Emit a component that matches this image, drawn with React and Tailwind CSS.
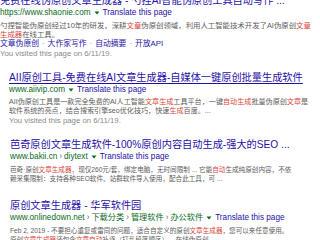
import React from 'react';

const results = [
  {
    title: '免费在线伪原创文章生成器 - 勺捏AI智能伪原创工具自动写作 ...',
    url: ['https://www.shaonie.com'],
    snippet: [
      [['勺捏智能伪原创经过10年的研发，深耕'], ['文章', 1], ['伪原创领域，利用人工智能技术开发了AI伪原创'], ['文章', 1]],
      [['生成器', 1], ['在线工具。']],
    ],
    sitelinks: ['文章伪原创', '大作家写作', '自动摘要', '开放API'],
    visited: true,
    wrap: 'pl-0 -mt-[6.5px]',
    snip: 'text-[7.4px]',
  },
  {
    title: 'AII原创工具-免费在线AI文章生成器-自媒体一键原创批量生成软件',
    underline: true,
    url: ['www.aiivip.com'],
    snippet: [
      [['AII伪原创工具是一款完全免费的AI人工智能'], ['文章生成', 1], ['工具平台，一键'], ['自动生成', 1], ['批量伪原创'], ['文章', 1], ['是']],
      [['软件系统的亮点，结合搜索引擎seo优化技巧，快速'], ['生成', 1], ['百度。...']],
    ],
    visited: true,
    wrap: 'pl-[9px] mt-[13px]',
    snip: 'text-[7.1px]',
  },
  {
    title: '芭奇原创文章生成软件-100%原创内容自动生成-强大的SEO ...',
    url: ['www.bakii.cn', 'diytext'],
    snippet: [
      [['芭奇·原创'], ['文章生成器', 1], ['，现仅260元/套，绑定电脑，无时间限制 ... 它能'], ['自动', 1], ['生成纯原创内容，不依']],
      [['赖采集限制：支持各种SEO软件、站群软件导入使用，配合此工具，可 ...']],
    ],
    wrap: 'pl-[10px] mt-[13px]',
    snip: 'text-[6.6px]',
  },
  {
    title: '原创文章生成器 - 华军软件园',
    url: ['www.onlinedown.net', '下载分类', '管理软件', '办公软件'],
    snippet: [
      [['Feb 2, 2019 - 不要担心重复或雷同的问题，适合自定义的原创'], ['文章生成器', 1], ['，您可以来任意使用。']],
      [['原创'], ['文章生成器', 1], ['还包含'], ['文章自动', 1], ['补逐（打乱段落顺序）... 在线伪原创']],
    ],
    wrap: 'pl-[10px] mt-[16px]',
    snip: 'text-[6.6px]',
  },
];

const Result = ({ r }) => (
  <div className={r.wrap}>
    <div
      className={`text-[10.2px] leading-[13px] whitespace-nowrap text-[#1f11a6] ${
        r.underline ? 'underline decoration-[0.8px] underline-offset-[1.5px]' : ''
      }`}
    >
      {r.title}
    </div>
    <div className="flex items-center text-[8.2px] leading-[12px] whitespace-nowrap">
      <span className="text-[#0b6a25]">
        {r.url.map((u, i) => (
          <React.Fragment key={i}>
            {i > 0 && <span className="text-[#5f6368] mx-[2px]">›</span>}
            {u}
          </React.Fragment>
        ))}
      </span>
      <svg width="6" height="4" viewBox="0 0 6 4" className="mx-[3px]">
        <path d="M0.5 0.5h5L3 3.5z" fill="#0b6a25" />
      </svg>
      <span className="text-[#1f11a6]">Translate this page</span>
    </div>
    <div className={`mt-[2px] ${r.snip} leading-[9px] text-[#5c5c5c]`}>
      {r.snippet.map((line, i) => (
        <div key={i} className="whitespace-nowrap">
          {line.map(([t, red], j) => (
            <span key={j} className={red ? 'text-[#d9463a]' : ''}>
              {t}
            </span>
          ))}
        </div>
      ))}
    </div>
    {r.sitelinks && (
      <div className="text-[7.8px] leading-[10px] whitespace-nowrap text-[#1f11a6]">
        {r.sitelinks.map((s, i) => (
          <React.Fragment key={i}>
            {i > 0 && <span className="text-[#777] mx-[3px]">·</span>}
            {s}
          </React.Fragment>
        ))}
      </div>
    )}
    {r.visited && (
      <div className="text-[7.8px] leading-[9px] whitespace-nowrap text-[#8a8a8a]">
        You visited this page on 6/11/19.
      </div>
    )}
  </div>
);

export default function App() {
  return (
    <div className="w-[320px] h-[240px] overflow-hidden bg-white font-['Liberation_Sans','Noto_Sans_CJK_SC',sans-serif]">
      {results.map((r, i) => (
        <Result key={i} r={r} />
      ))}
    </div>
  );
}
